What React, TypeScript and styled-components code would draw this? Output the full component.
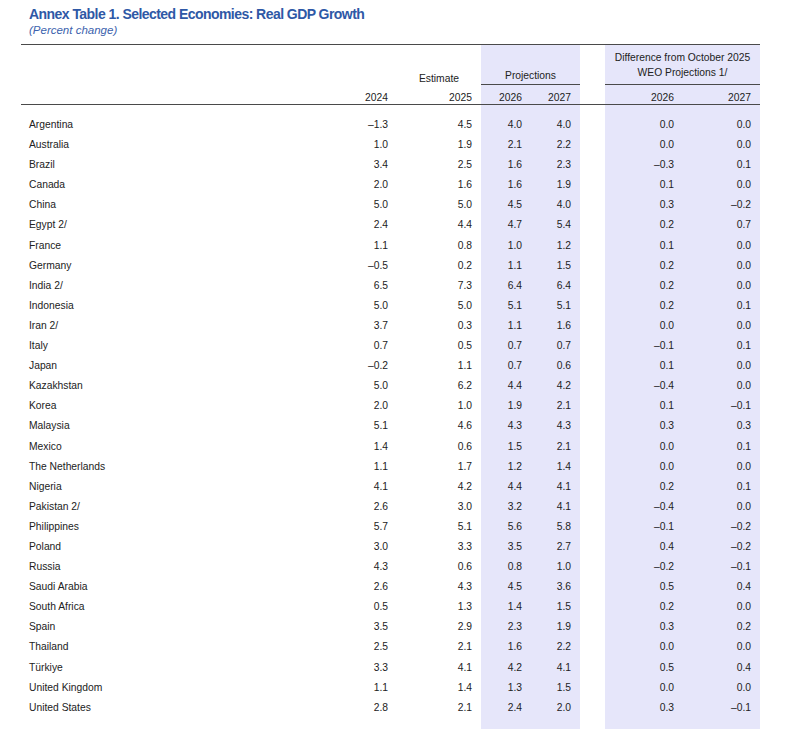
import React from 'react';
import styled, { createGlobalStyle } from 'styled-components';

const TITLE_BLUE = '#2e58a6';
const BAND = '#e6e6fa';
const RULE = '#4a4a4a';
const INK = '#222';

// label | 2024 | 2025 | proj 2026 | proj 2027 | gap | diff 2026 | diff 2027
const COLUMNS = '319px 57px 84px 50px 49px 25px 78px 77px';

const GlobalStyle = createGlobalStyle`
  html, body {
    margin: 0;
    padding: 0;
    background: #fff;
  }

  body {
    font-family: "Liberation Sans", Arial, sans-serif;
    color: ${INK};
  }
`;

const Page = styled.div`
  width: 800px;
  height: 729px;
  overflow: hidden;
  padding: 6px 0 0 21px;
  box-sizing: border-box;
`;

const Title = styled.h1`
  margin: 0;
  padding-left: 8px;
  font-size: 14px;
  line-height: 17px;
  letter-spacing: -0.55px;
  font-weight: 700;
  color: ${TITLE_BLUE};
`;

const Subtitle = styled.div`
  padding-left: 8px;
  font-size: 11.5px;
  line-height: 14px;
  font-style: italic;
  color: #3b62ad;
`;

const Table = styled.div`
  margin-top: 7px;
  width: 739px;
  min-height: 700px;
  border-top: 1px solid ${RULE};
  font-size: 10.3px;
  background: linear-gradient(
    90deg,
    transparent 460px,
    ${BAND} 460px,
    ${BAND} 559px,
    transparent 559px,
    transparent 584px,
    ${BAND} 584px
  );
`;

const Row = styled.div<{ $rule?: boolean }>`
  display: grid;
  grid-template-columns: ${COLUMNS};
  border-bottom: ${(p) => (p.$rule ? `1px solid ${RULE}` : 'none')};
`;

const GroupRow = styled(Row)`
  height: 40px;
  align-items: end;
`;

const YearRow = styled(Row)`
  padding-top: 7px;
  line-height: 12px;
  height: 12px;
`;

const Body = styled.div`
  padding-top: 10px;
`;

const DataRow = styled(Row)`
  line-height: 20.1px;
`;

const Label = styled.div`
  padding-left: 8px;
  white-space: nowrap;
`;

const Num = styled.div`
  text-align: right;
  padding-right: 9px;
  white-space: nowrap;
`;

const Estimate = styled.div`
  grid-column: 3;
  text-align: right;
  padding-right: 22px;
  line-height: 12px;
`;

const Group = styled.div<{ $col: string; $pad: number }>`
  grid-column: ${(p) => p.$col};
  text-align: center;
  border-bottom: 1px solid ${RULE};
  line-height: 15px;
  padding-bottom: ${(p) => p.$pad}px;
`;

type Entry = [string, string, string, string, string, string, string];

const ROWS: Entry[] = [
  ['Argentina', '–1.3', '4.5', '4.0', '4.0', '0.0', '0.0'],
  ['Australia', '1.0', '1.9', '2.1', '2.2', '0.0', '0.0'],
  ['Brazil', '3.4', '2.5', '1.6', '2.3', '–0.3', '0.1'],
  ['Canada', '2.0', '1.6', '1.6', '1.9', '0.1', '0.0'],
  ['China', '5.0', '5.0', '4.5', '4.0', '0.3', '–0.2'],
  ['Egypt 2/', '2.4', '4.4', '4.7', '5.4', '0.2', '0.7'],
  ['France', '1.1', '0.8', '1.0', '1.2', '0.1', '0.0'],
  ['Germany', '–0.5', '0.2', '1.1', '1.5', '0.2', '0.0'],
  ['India 2/', '6.5', '7.3', '6.4', '6.4', '0.2', '0.0'],
  ['Indonesia', '5.0', '5.0', '5.1', '5.1', '0.2', '0.1'],
  ['Iran 2/', '3.7', '0.3', '1.1', '1.6', '0.0', '0.0'],
  ['Italy', '0.7', '0.5', '0.7', '0.7', '–0.1', '0.1'],
  ['Japan', '–0.2', '1.1', '0.7', '0.6', '0.1', '0.0'],
  ['Kazakhstan', '5.0', '6.2', '4.4', '4.2', '–0.4', '0.0'],
  ['Korea', '2.0', '1.0', '1.9', '2.1', '0.1', '–0.1'],
  ['Malaysia', '5.1', '4.6', '4.3', '4.3', '0.3', '0.3'],
  ['Mexico', '1.4', '0.6', '1.5', '2.1', '0.0', '0.1'],
  ['The Netherlands', '1.1', '1.7', '1.2', '1.4', '0.0', '0.0'],
  ['Nigeria', '4.1', '4.2', '4.4', '4.1', '0.2', '0.1'],
  ['Pakistan 2/', '2.6', '3.0', '3.2', '4.1', '–0.4', '0.0'],
  ['Philippines', '5.7', '5.1', '5.6', '5.8', '–0.1', '–0.2'],
  ['Poland', '3.0', '3.3', '3.5', '2.7', '0.4', '–0.2'],
  ['Russia', '4.3', '0.6', '0.8', '1.0', '–0.2', '–0.1'],
  ['Saudi Arabia', '2.6', '4.3', '4.5', '3.6', '0.5', '0.4'],
  ['South Africa', '0.5', '1.3', '1.4', '1.5', '0.2', '0.0'],
  ['Spain', '3.5', '2.9', '2.3', '1.9', '0.3', '0.2'],
  ['Thailand', '2.5', '2.1', '1.6', '2.2', '0.0', '0.0'],
  ['Türkiye', '3.3', '4.1', '4.2', '4.1', '0.5', '0.4'],
  ['United Kingdom', '1.1', '1.4', '1.3', '1.5', '0.0', '0.0'],
  ['United States', '2.8', '2.1', '2.4', '2.0', '0.3', '–0.1'],
];

const App: React.FC = () => {
  return (
    <>
      <GlobalStyle />
      <Page>
        <Title>Annex Table 1. Selected Economies: Real GDP Growth</Title>
        <Subtitle>(Percent change)</Subtitle>
        <Table>
          <GroupRow>
            <Estimate>Estimate</Estimate>
            <Group $col="4 / 6" $pad={1}>Projections</Group>
            <Group $col="7 / 9" $pad={4}>
              Difference from October 2025
              <br />
              WEO Projections 1/
            </Group>
          </GroupRow>
          <YearRow $rule>
            <Label />
            <Num>2024</Num>
            <Num>2025</Num>
            <Num>2026</Num>
            <Num>2027</Num>
            <div />
            <Num>2026</Num>
            <Num>2027</Num>
          </YearRow>
          <Body>
            {ROWS.map(([name, y24, y25, p26, p27, d26, d27]) => (
              <DataRow key={name}>
                <Label>{name}</Label>
                <Num>{y24}</Num>
                <Num>{y25}</Num>
                <Num>{p26}</Num>
                <Num>{p27}</Num>
                <div />
                <Num>{d26}</Num>
                <Num>{d27}</Num>
              </DataRow>
            ))}
          </Body>
        </Table>
      </Page>
    </>
  );
};

export default App;
